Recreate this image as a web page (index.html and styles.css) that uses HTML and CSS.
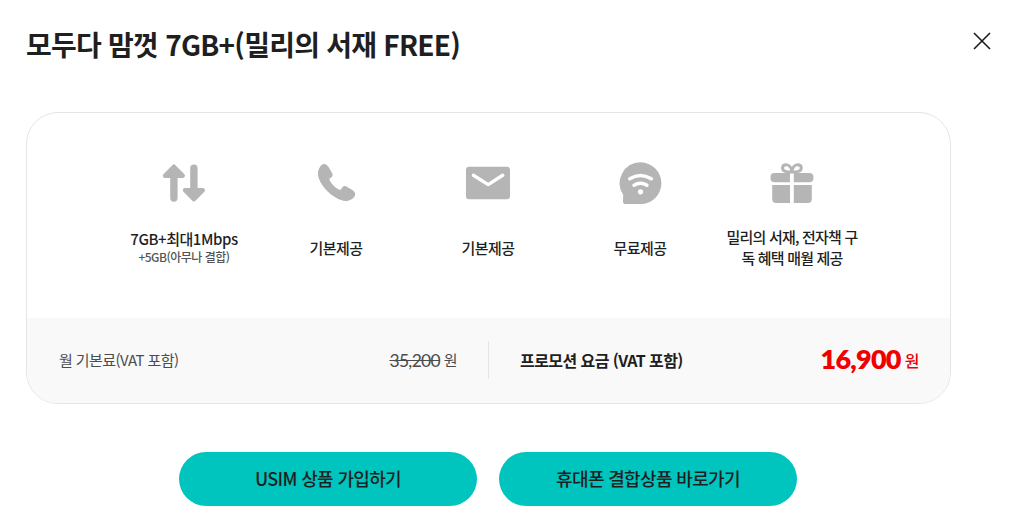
FILE: index.html
```html
<!DOCTYPE html>
<html lang="ko">
<head>
    <meta charset="UTF-8">
    <meta name="viewport" content="width=device-width, initial-scale=1.0">
    <title>모두다 맘껏 7GB+(밀리의 서재 FREE)</title>
    <link rel="stylesheet" href="styles.css">
</head>
<body>
    <div class="popup">
        <header class="popup-header">
            <h1>모두다 맘껏 7GB+(밀리의 서재 FREE)</h1>
            <button type="button" class="close-btn" aria-label="닫기">
                <svg width="18" height="18" viewBox="0 0 18 18">
                    <path d="M1 1l16 16M17 1L1 17" fill="none" stroke="#1a1a1a" stroke-width="1.6"/>
                </svg>
            </button>
        </header>

        <section class="plan-card">
            <ul class="benefits">
                <li>
                    <!-- data -->
                    <svg class="icon" viewBox="0 0 56 56">
                        <path d="M17.9 43V15M37.9 13.2V40" stroke-width="7.4"/>
                        <path class="solid" d="M17.9 11.7L26.8 20.8H9ZM37.9 44.3L46.8 35.2H29Z" stroke-width="4.4"/>
                    </svg>
                    <div class="desc">
                        <strong class="data">7GB+최대1Mbps</strong>
                        <span class="extra">+5GB(아무나 결합)</span>
                    </div>
                </li>
                <li>
                    <!-- voice -->
                    <svg class="icon" viewBox="0 0 56 56">
                        <path class="fill" d="M15.9 9C17.6 8.9 19.2 10 20.4 11.8L24.2 18.2C25.3 20.3 24.5 22 21.4 23.6C21.6 27.8 28.4 34.6 32.7 34.9C34.2 31.4 36.1 30.3 38.3 31.4L44.7 35.3C46.6 36.6 47.5 38.5 47.1 40.2C46.3 43.2 41.6 46 37.8 46C26 45.5 10.2 29.8 9.9 18.6C9.9 14.6 12.8 9.3 15.9 9Z"/>
                    </svg>
                    <div class="desc"><strong>기본제공</strong></div>
                </li>
                <li>
                    <!-- message -->
                    <svg class="icon" viewBox="0 0 56 56">
                        <rect class="fill" x="6" y="11.8" width="44" height="32.4" rx="3"/>
                        <path class="line" d="M13.4 20.3L28.2 29.6L42.7 20.3" stroke-width="3.4"/>
                    </svg>
                    <div class="desc"><strong>기본제공</strong></div>
                </li>
                <li>
                    <!-- wifi -->
                    <svg class="icon" viewBox="0 0 56 56">
                        <path class="fill" d="M28.5 7.3A20.9 20.9 0 0 1 28.5 49.1H13.6Q10.9 49.1 11 46.3L11.2 39.8A20.9 20.9 0 0 1 28.5 7.3Z"/>
                        <path class="line" d="M17.7 23.8Q28.5 17.1 39.3 23.8M22 30.3Q28.5 26.3 35 30.3" stroke-width="3.4"/>
                        <circle class="dot" cx="28.5" cy="36.8" r="2.6"/>
                    </svg>
                    <div class="desc"><strong>무료제공</strong></div>
                </li>
                <li>
                    <!-- gift -->
                    <svg class="icon" viewBox="0 0 56 56">
                        <path class="bow" d="M27.9 17C23 17.4 18.5 16.3 18.5 13C18.5 10.8 20.3 9.8 22.3 9.8C25.4 9.8 27.5 13 27.9 17C28.3 13 30.4 9.8 33.5 9.8C35.5 9.8 37.3 10.8 37.3 13C37.3 16.3 32.8 17.4 27.9 17Z" stroke-width="3"/>
                        <path class="fill" d="M26 18H10.5A4 4 0 0 0 6.5 22V23.3A4 4 0 0 0 10.5 27.2H26ZM29.8 18H45.4A4 4 0 0 1 49.4 22V23.3A4 4 0 0 1 45.4 27.2H29.8ZM26 30H8.2V44A4 4 0 0 0 12.2 48H26ZM29.8 30H47.8V44A4 4 0 0 1 43.8 48H29.8Z"/>
                    </svg>
                    <div class="desc"><strong class="multi">밀리의 서재, 전자책 구<br>독 혜택 매월 제공</strong></div>
                </li>
            </ul>

            <div class="prices">
                <div class="price-item">
                    <span class="label">월 기본료(VAT 포함)</span>
                    <span class="price"><del>35,200</del> <span class="unit">원</span></span>
                </div>
                <div class="price-item promo">
                    <span class="label">프로모션 요금 (VAT 포함)</span>
                    <span class="price"><em>16,900</em> <span class="unit">원</span></span>
                </div>
            </div>
        </section>

        <div class="buttons">
            <a href="#" class="btn">USIM 상품 가입하기</a>
            <a href="#" class="btn">휴대폰 결합상품 바로가기</a>
        </div>
    </div>
</body>
</html>
```
FILE: styles.css
```css
* {
    margin: 0;
    padding: 0;
    box-sizing: border-box;
}

body {
    background: #fff;
    color: #1f1f1f;
    font-family: 'Noto Sans CJK KR', sans-serif;
    letter-spacing: -0.5px;
    overflow: hidden;
}

.popup {
    padding: 22px 26px 0;
}

.popup-header {
    display: flex;
    justify-content: space-between;
    align-items: flex-start;
    height: 90px;
}

h1 {
    font-size: 28px;
    font-weight: 700;
    line-height: 44px;
    letter-spacing: -0.76px;
}

.close-btn {
    display: flex;
    padding-top: 10px;
    border: none;
    background: none;
    cursor: pointer;
}

.plan-card {
    width: 925px;
    height: 292px;
    border: 1px solid #e5e5e5;
    border-radius: 32px;
    overflow: hidden;
}

.benefits {
    display: flex;
    height: 205px;
    padding: 42px 0 0 81px;
    list-style: none;
}

.benefits li {
    display: flex;
    flex-direction: column;
    align-items: center;
    width: 152px;
}

.icon {
    width: 56px;
    height: 56px;
    fill: none;
    stroke: #b5b5b5;
    stroke-linecap: round;
    stroke-linejoin: round;
}

.icon .solid {
    fill: #b5b5b5;
}

.icon .fill {
    fill: #b5b5b5;
    stroke: none;
}

.icon .line {
    stroke: #fff;
}

.icon .dot {
    fill: #fff;
    stroke: none;
}

.desc {
    display: flex;
    flex-direction: column;
    justify-content: center;
    height: 72px;
    text-align: center;
    white-space: nowrap;
}

.desc strong {
    font-size: 15px;
    font-weight: 500;
    line-height: 21px;
}

.desc .data {
    line-height: 20px;
    letter-spacing: -0.45px;
}

.desc .multi {
    letter-spacing: -0.8px;
}

.desc .extra {
    color: #555;
    font-size: 12px;
    font-weight: 500;
    line-height: 16px;
}

.prices {
    display: flex;
    align-items: center;
    height: 85px;
    padding-bottom: 2px;
    background: #f9f9f9;
}

.price-item {
    display: flex;
    justify-content: space-between;
    align-items: center;
    width: 461px;
    height: 38px;
    padding: 0 31px 0 32px;
    color: #4c4c4c;
    font-size: 15px;
}

.price-item .label {
    letter-spacing: -0.57px;
}

.price-item del {
    font-family: Lato, sans-serif;
    font-size: 17.5px;
    letter-spacing: -0.7px;
}

.price-item .unit {
    vertical-align: 1px;
}

.promo {
    padding: 0 30px 0 31px;
    border-left: 1px solid #e5e5e5;
    color: #1f1f1f;
    font-size: 16px;
    font-weight: 700;
}

.promo .price {
    padding-bottom: 2px;
    color: #f00000;
    font-weight: 500;
}

.promo .unit {
    vertical-align: 2px;
}

.promo em {
    font-family: Lato, sans-serif;
    font-size: 27px;
    font-style: normal;
    font-weight: 800;
    letter-spacing: -0.75px;
}

.buttons {
    display: flex;
    gap: 22px;
    margin-top: 48px;
    padding-left: 153px;
}

.btn {
    width: 298px;
    height: 54px;
    border-radius: 27px;
    background: #00c4be;
    color: #1f1f1f;
    font-size: 18px;
    font-weight: 500;
    line-height: 53px;
    letter-spacing: -0.65px;
    text-align: center;
    text-decoration: none;
}
```
